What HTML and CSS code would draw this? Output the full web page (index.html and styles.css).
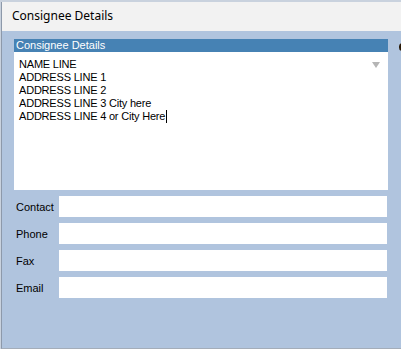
FILE: index.html
```html
<!DOCTYPE html>
<html lang="en">
<head>
    <meta charset="UTF-8">
    <meta name="viewport" content="width=device-width, initial-scale=1.0">
    <title>Consignee Details</title>
    <link rel="stylesheet" href="styles.css">
</head>
<body>
    <div class="window">
        <div class="titlebar">Consignee Details</div>
        <div class="client">
            <div class="top-row">
                <div class="panel">
                    <div class="panel-head">Consignee Details</div>
                    <div class="address">
                        <div>NAME LINE</div>
                        <div>ADDRESS LINE 1</div>
                        <div>ADDRESS LINE 2</div>
                        <div>ADDRESS LINE 3 City here</div>
                        <div>ADDRESS LINE 4 or City Here<span class="caret"></span></div>
                        <span class="drop"></span>
                    </div>
                </div>
                <span class="cut-glyph"></span>
            </div>

            <div class="fields">
                <div class="field">
                    <label>Contact</label>
                    <div class="input"></div>
                </div>
                <div class="field">
                    <label>Phone</label>
                    <div class="input"></div>
                </div>
                <div class="field">
                    <label>Fax</label>
                    <div class="input"></div>
                </div>
                <div class="field">
                    <label>Email</label>
                    <div class="input"></div>
                </div>
            </div>
        </div>
    </div>
</body>
</html>
```

FILE: styles.css
```css
body {
    margin: 0;
    background-color: #c9d2de;
    overflow: hidden;
    font-family: "Liberation Sans", Arial, sans-serif;
}
.window {
    margin-left: 1px;
    margin-top: 2px;
    height: 346px;
    border-left: 1px solid #8d99aa;
    border-bottom: 1px solid #a4adb9;
    background-color: #b0c4de;
    overflow: hidden;
}
.titlebar {
    height: 29px;
    line-height: 28px;
    padding-left: 10px;
    background-color: #f2f2f2;
    font-family: "Noto Sans", "Open Sans", sans-serif;
    font-size: 12px;
    color: #000;
}
.client {
    padding: 8px 0 0 12px;
}
.top-row {
    display: flex;
    align-items: flex-start;
}
.panel {
    width: 374px;
    flex: none;
}
.panel-head {
    height: 13px;
    line-height: 13px;
    padding-left: 2px;
    background-color: #4682b4;
    color: #fff;
    font-size: 11px;
}
.address {
    position: relative;
    height: 132px;
    padding: 6px 0 0 5px;
    background-color: #fff;
    font-size: 11px;
    line-height: 13px;
    letter-spacing: -0.2px;
    color: #000;
}
.caret {
    display: inline-block;
    width: 1px;
    height: 13px;
    margin-left: 1px;
    vertical-align: top;
    background-color: #000;
}
.drop {
    position: absolute;
    top: 10px;
    right: 8px;
    border-left: 4px solid transparent;
    border-right: 4px solid transparent;
    border-top: 6px solid #b5b5b5;
}
.cut-glyph {
    flex: none;
    width: 7px;
    height: 8px;
    margin: 4px 0 0 11px;
    border-radius: 4px;
    border: 2px solid #2a1a08;
    box-sizing: border-box;
}
.fields {
    margin-top: 6px;
    width: 373px;
}
.field {
    display: flex;
    align-items: center;
    height: 21px;
    margin-bottom: 6px;
}
.field label {
    width: 43px;
    padding-left: 2px;
    font-size: 11px;
    color: #000;
}
.input {
    flex: 1;
    height: 21px;
    background-color: #fff;
}
```
